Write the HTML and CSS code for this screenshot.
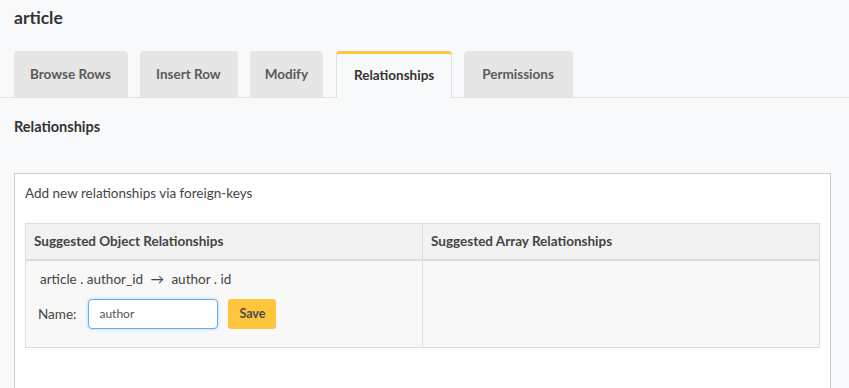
FILE: index.html
```html
<!DOCTYPE html>
<html>
<head>
<meta charset="utf-8">
<link rel="stylesheet" href="styles.css">
</head>
<body>
<div class="header">
  <h1 class="title">article</h1>
  <ul class="tabs">
    <li class="tab">Browse Rows</li>
    <li class="tab">Insert Row</li>
    <li class="tab tab-narrow">Modify</li>
    <li class="tab active">Relationships</li>
    <li class="tab tab-wide">Permissions</li>
  </ul>
</div>
<div class="content">
  <h4 class="section-title">Relationships</h4>
  <div class="box">
    <div class="box-intro">Add new relationships via foreign-keys</div>
    <table class="rel-table">
      <thead>
        <tr>
          <th>Suggested Object Relationships</th>
          <th>Suggested Array Relationships</th>
        </tr>
      </thead>
      <tbody>
        <tr>
          <td>
            <div class="rel-map">article . author_id <span class="arrow">→</span> author . id</div>
            <div class="rel-form">
              <span class="label">Name:</span>
              <input class="name-input" type="text" value="author">
              <button class="save-btn">Save</button>
            </div>
          </td>
          <td></td>
        </tr>
      </tbody>
    </table>
  </div>
</div>
</body>
</html>
```

FILE: styles.css
```css
* { box-sizing: border-box; }
html, body { margin: 0; padding: 0; }
body {
  background: #f8f9fa;
  font-family: Lato, "Open Sans", sans-serif;
  color: #333;
  font-size: 13.5px;
  width: 849px;
  height: 388px;
  overflow: hidden;
}
.title {
  margin: 0;
  padding: 8px 14px;
  font-size: 17.5px;
  line-height: 20px;
  font-weight: 700;
  color: #333;
}
.tabs {
  list-style: none;
  margin: 15px 0 0 0;
  padding: 0 0 0 14px;
  display: flex;
  gap: 12px;
  border-bottom: 1px solid #e3e3e3;
  height: 47px;
}
.tab {
  height: 46px;
  line-height: 46px;
  padding: 0 17px 0 16px;
  background: #e6e6e6;
  border-radius: 4px 4px 0 0;
  font-weight: 700;
  font-size: 13.5px;
  color: #5a5a5a;
}
.tab-narrow { padding: 0 15px 0 15px; }
.tab-wide { padding: 0 19px 0 18px; }
.tab.active {
  background: #f8f9fa;
  border: 1px solid #e0e0e0;
  border-top: 3px solid #fec53d;
  border-bottom: none;
  height: 47px;
  line-height: 42px;
  padding: 0 17px 0 17px;
  margin-left: 1px;
  color: #333;
}
.content { padding: 0 14px; }
.section-title {
  margin: 19px 0 0 0;
  font-size: 14.5px;
  line-height: 20px;
  font-weight: 700;
  color: #333;
}
.box {
  margin-top: 36px;
  width: 817px;
  height: 215px;
  background: #fff;
  border: 1px solid #ccc;
  border-bottom: none;
  padding: 9px 10px 0 10px;
}
.box-intro {
  line-height: 20px;
  color: #444;
}
.rel-table {
  margin-top: 20px;
  width: 795px;
  border-collapse: collapse;
  table-layout: fixed;
}
.rel-table th {
  background: #f2f2f2;
  border: 1px solid #ddd;
  border-bottom: 2px solid #ddd;
  height: 36px;
  padding: 0 8px;
  text-align: left;
  font-weight: 700;
  font-size: 13.5px;
  color: #444;
}
.rel-table td {
  background: #f8f8f8;
  border: 1px solid #ddd;
  height: 88px;
  padding: 8px 12px 0 12px;
  vertical-align: top;
}
.rel-map {
  line-height: 20px;
  color: #444;
  padding-left: 2px;
}
.arrow { margin: 0 4px; }
.rel-form {
  margin-top: 10px;
  display: flex;
  align-items: center;
}
.label {
  color: #444;
  margin-right: 12px;
}
.name-input {
  width: 130px;
  height: 30px;
  border: 1px solid #66afe9;
  border-radius: 4px;
  box-shadow: 0 0 3px rgba(102, 175, 233, 0.6);
  padding: 0 10px;
  font-family: Lato, sans-serif;
  font-size: 12px;
  color: #555;
  outline: none;
}
.save-btn {
  margin-left: 10px;
  width: 48px;
  height: 30px;
  border: none;
  border-radius: 3px;
  background: #fec53d;
  font-family: Lato, sans-serif;
  font-weight: 700;
  font-size: 12.5px;
  color: #4a4a4a;
}
```
